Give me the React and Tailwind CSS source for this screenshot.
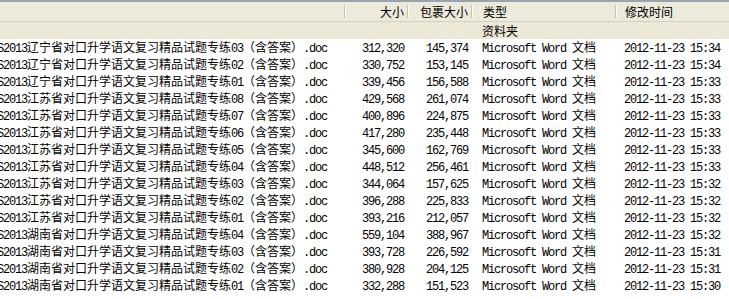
import React from "react";

const rows = [
  ["辽宁", "03", "312,320", "145,374", "15:34"],
  ["辽宁", "02", "330,752", "153,145", "15:34"],
  ["辽宁", "01", "339,456", "156,588", "15:33"],
  ["江苏", "08", "429,568", "261,074", "15:33"],
  ["江苏", "07", "400,896", "224,875", "15:33"],
  ["江苏", "06", "417,280", "235,448", "15:33"],
  ["江苏", "05", "345,600", "162,769", "15:33"],
  ["江苏", "04", "448,512", "256,461", "15:33"],
  ["江苏", "03", "344,064", "157,625", "15:32"],
  ["江苏", "02", "396,288", "225,833", "15:32"],
  ["江苏", "01", "393,216", "212,057", "15:32"],
  ["湖南", "04", "559,104", "388,967", "15:32"],
  ["湖南", "03", "393,728", "226,592", "15:31"],
  ["湖南", "02", "380,928", "204,125", "15:31"],
  ["湖南", "01", "332,288", "151,523", "15:30"],
];

function Mixed({ text }) {
  const parts = text.split(/([\x00-\x7F]+)/).filter((p) => p.length > 0);
  return (
    <>
      {parts.map((p, i) =>
        /^[\x00-\x7F]+$/.test(p) ? (
          <span
            key={i}
            className="font-['Liberation_Mono',monospace] text-[12px] tracking-[-1.2px] whitespace-pre"
          >
            {p}
          </span>
        ) : (
          <span
            key={i}
            className="font-['Noto_Sans_CJK_SC',sans-serif] text-[12px] whitespace-pre"
          >
            {p}
          </span>
        )
      )}
    </>
  );
}

function Sep() {
  return <div className="w-[2px] h-[13px] border-l border-[#c5c2b2] border-r border-r-white shrink-0" />;
}

export default function App() {
  return (
    <div className="w-[729px] h-[299px] bg-white overflow-hidden text-black font-['Noto_Sans_CJK_SC',sans-serif]">
      <div className="h-[2px] bg-[#9ba4ad]" />
      <div className="flex h-[19px] bg-[#ebeadb] text-[12px] leading-[19px] border-b border-[#d5d1bf] box-content">
        <div className="w-[346px] flex items-center justify-end shrink-0">
          <Sep />
        </div>
        <div className="w-[63px] flex items-center justify-end shrink-0">
          <span>大小</span>
          <div className="w-[3px]" />
          <Sep />
        </div>
        <div className="w-[64px] flex items-center justify-end shrink-0">
          <span>包裹大小</span>
          <div className="w-[3px]" />
          <Sep />
        </div>
        <div className="w-[144px] flex items-center justify-between pl-[10px] shrink-0">
          <span>类型</span>
          <Sep />
        </div>
        <div className="flex-1 flex items-center pl-[8px]">
          <span>修改时间</span>
        </div>
      </div>
      <div className="flex h-[17px] bg-[#ece9d8] leading-[17px] items-center">
        <div className="w-[473px] shrink-0" />
        <div className="pl-[9px] text-[12px]">资料夹</div>
      </div>
      {rows.map(([prov, n, size, pack, time], i) => (
        <div key={i} className="flex h-[17px] leading-[17px] items-center">
          <div className="w-[346px] shrink-0 overflow-hidden whitespace-nowrap">
            <div className="ml-[-3px]">
              <Mixed text={`S2013${prov}省对口升学语文复习精品试题专练${n}（含答案）.doc`} />
            </div>
          </div>
          <div className="w-[63px] shrink-0 text-right pr-[5px]">
            <Mixed text={size} />
          </div>
          <div className="w-[64px] shrink-0 text-right pr-[5px]">
            <Mixed text={pack} />
          </div>
          <div className="w-[144px] shrink-0 pl-[9px] whitespace-nowrap">
            <Mixed text="Microsoft Word 文档" />
          </div>
          <div className="flex-1 pl-[7px] whitespace-nowrap">
            <Mixed text={`2012-11-23 ${time}`} />
          </div>
        </div>
      ))}
    </div>
  );
}
